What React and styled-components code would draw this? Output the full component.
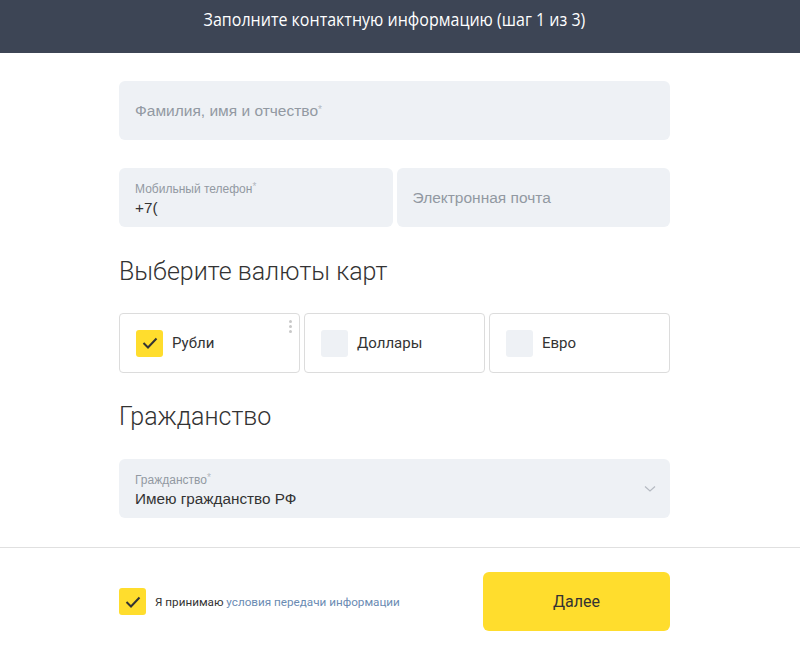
import styled, { createGlobalStyle } from "styled-components";

const GlobalStyle = createGlobalStyle`
    body {
        margin: 0;
        background: #fff;
        font-family: "Liberation Sans", Arial, sans-serif;
        color: #333;
    }
`;

const Header = styled.div`
    height: 53px;
    background-color: #3d4555;
    display: flex;
    justify-content: center;
    align-items: center;
    padding: 0 12px 16px 0;
    box-sizing: border-box;
    color: #fff;
    font-family: "Open Sans", sans-serif;
    font-size: 18px;

    span {
        display: inline-block;
        transform: scaleX(0.89);
    }
`;

const Content = styled.div`
    width: 551px;
    margin-left: 119px;
    padding-top: 28px;
    display: flex;
    flex-direction: column;
`;

const Row = styled.div`
    display: flex;
    gap: 4px;
    margin-top: ${(p) => p.$top || 0}px;
`;

const Field = styled.div`
    flex: 1;
    height: 59px;
    background: #eef1f5;
    border-radius: 6px;
    box-sizing: border-box;
    padding: 0 16px;
    display: flex;
    flex-direction: column;
    justify-content: center;
    position: relative;
`;

const Placeholder = styled.div`
    font-size: 15.5px;
    color: #9299a2;
`;

const Label = styled.div`
    font-size: 12px;
    color: #9299a2;
    margin-top: 2px;
    line-height: 14px;
`;

const Star = styled.sup`
    font-size: 10px;
    color: #b3b8bf;
    vertical-align: 3px;
`;

const Value = styled.div`
    font-size: 15.3px;
    color: #333;
    line-height: 20px;
    margin-top: 2px;
`;

const Heading = styled.h2`
    margin: ${(p) => p.$top}px 0 0;
    font-family: Roboto, sans-serif;
    font-size: 25px;
    font-weight: 300;
    color: #333;
    line-height: 30px;
`;

const Card = styled.div`
    flex: 1;
    height: 60px;
    border: 1px solid #dcdcdc;
    border-radius: 4px;
    box-sizing: border-box;
    display: flex;
    align-items: center;
    padding-left: 16px;
    gap: 9px;
    position: relative;
    font-family: Roboto, sans-serif;
    font-size: 15px;
`;

const Box = styled.div`
    width: 27px;
    height: 27px;
    border-radius: 3px;
    background: ${(p) => (p.$checked ? "#ffdd2d" : "#eef1f5")};
    display: flex;
    align-items: center;
    justify-content: center;
    flex-shrink: 0;
`;

const Dots = styled.div`
    position: absolute;
    right: 7px;
    top: 6px;
    display: flex;
    flex-direction: column;
    gap: 2px;
    span {
        width: 3px;
        height: 3px;
        border-radius: 50%;
        background: #c8c8c8;
    }
`;

const Chevron = styled.svg`
    position: absolute;
    right: 14px;
    top: 26px;
`;

const Divider = styled.div`
    height: 1px;
    background: #e0e0e0;
    margin-top: 29px;
`;

const Footer = styled.div`
    width: 551px;
    margin: 24px 0 0 119px;
    display: flex;
    align-items: center;
    justify-content: space-between;
`;

const Agree = styled.div`
    display: flex;
    align-items: center;
    gap: 9px;
    font-family: Roboto, sans-serif;
    font-size: 11.7px;
    color: #333;
    a {
        color: #6a8bb3;
        text-decoration: none;
    }
`;

const NextButton = styled.button`
    width: 187px;
    height: 59px;
    border: none;
    border-radius: 6px;
    background: #ffdd2d;
    font-family: Roboto, sans-serif;
    font-size: 16px;
    color: #333;
`;

const Check = () => (
    <svg width="16" height="12" viewBox="0 0 16 12">
        <path d="M1.5 6 L6 10.5 L14.5 1.5" fill="none" stroke="#333" strokeWidth="2" />
    </svg>
);

const currencies = [
    { name: "Рубли", checked: true },
    { name: "Доллары" },
    { name: "Евро" },
];

const App = () => (
    <>
        <GlobalStyle />
        <Header>
            <span>Заполните контактную информацию (шаг 1 из 3)</span>
        </Header>
        <Content>
            <Row>
                <Field>
                    <Placeholder>
                        Фамилия, имя и отчество<Star>*</Star>
                    </Placeholder>
                </Field>
            </Row>
            <Row $top={28}>
                <Field>
                    <Label>
                        Мобильный телефон<Star>*</Star>
                    </Label>
                    <Value>+7(</Value>
                </Field>
                <Field>
                    <Placeholder>Электронная почта</Placeholder>
                </Field>
            </Row>
            <Heading $top={30}>Выберите валюты карт</Heading>
            <Row $top={26}>
                {currencies.map((c) => (
                    <Card key={c.name}>
                        <Box $checked={c.checked}>{c.checked && <Check />}</Box>
                        {c.name}
                        {c.checked && (
                            <Dots>
                                <span />
                                <span />
                                <span />
                            </Dots>
                        )}
                    </Card>
                ))}
            </Row>
            <Heading $top={29}>Гражданство</Heading>
            <Row $top={27}>
                <Field>
                    <Label>
                        Гражданство<Star>*</Star>
                    </Label>
                    <Value>Имею гражданство РФ</Value>
                    <Chevron width="12" height="8" viewBox="0 0 12 8">
                        <path d="M1 1.5 L6 6 L11 1.5" fill="none" stroke="#b5bac2" strokeWidth="1.2" />
                    </Chevron>
                </Field>
            </Row>
        </Content>
        <Divider />
        <Footer>
            <Agree>
                <Box $checked>
                    <Check />
                </Box>
                <span>
                    Я принимаю <a href="#">условия передачи информации</a>
                </span>
            </Agree>
            <NextButton>Далее</NextButton>
        </Footer>
    </>
);

export default App;
